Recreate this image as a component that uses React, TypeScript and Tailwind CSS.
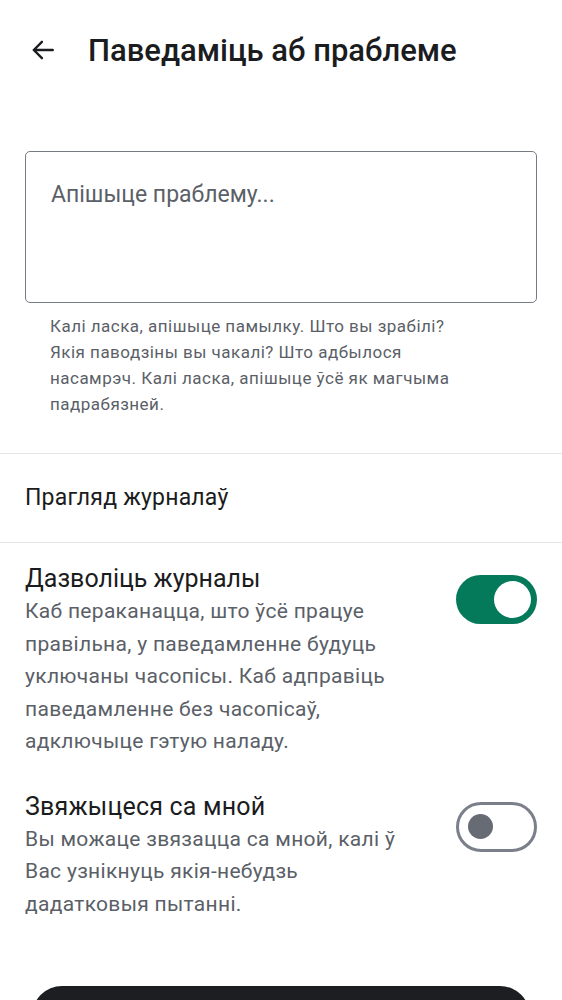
import React from "react";

export default function App() {
  return (
    <div className="w-[562px] h-[1000px] overflow-hidden bg-white" style={{ fontFamily: "Roboto, 'Noto Sans', sans-serif" }}>
      <div className="h-[100px] flex items-center pl-[30px]">
        <svg width="26" height="26" viewBox="0 0 24 24" fill="none" stroke="#1b1c20" strokeWidth="2.2" strokeLinecap="round" strokeLinejoin="round">
          <path d="M21 12H3.5M11 4.5L3.5 12L11 19.5" />
        </svg>
        <h1 className="ml-[32px] text-[31px] font-medium text-[#1b1c20] leading-none">Паведаміць аб праблеме</h1>
      </div>
      <div className="px-[25px] pt-[51px]">
        <div className="h-[152px] border border-[#767b85] rounded-[5px] px-[25px] pt-[28px] text-[23px] text-[#5b5f68] leading-[30px]">
          Апішыце праблему...
        </div>
        <p className="pl-[25px] pr-[55px] mt-[10px] text-[17px] leading-[26px] tracking-[0.48px] text-[#5b5f68]">
          Калі ласка, апішыце памылку. Што вы зрабілі? Якія паводзіны вы чакалі? Што адбылося насамрэч. Калі ласка, апішыце ўсё як магчыма падрабязней.
        </p>
      </div>
      <div className="mt-[36px] border-t border-[#e6e6ea]" />
      <div className="h-[88px] flex items-center px-[25px] text-[23px] tracking-[0.2px] text-[#1b1c20]">Прагляд журналаў</div>
      <div className="border-t border-[#e6e6ea]" />
      <div className="flex items-start px-[25px] pt-[20px] gap-[40px]">
        <div className="flex-1">
          <div className="text-[25px] leading-[32px] text-[#1b1c20]">Дазволіць журналы</div>
          <div className="text-[21px] leading-[32.5px] text-[#5b5f68] tracking-[0.3px]">
            Каб пераканацца, што ўсё працуе правільна, у паведамленне будуць уключаны часопісы. Каб адправіць паведамленне без часопісаў, адключыце гэтую наладу.
          </div>
        </div>
        <div className="mt-[12px] w-[81px] h-[49px] rounded-full bg-[#047a5b] flex items-center justify-end pr-[6px] shrink-0">
          <div className="w-[37px] h-[37px] rounded-full bg-white" />
        </div>
      </div>
      <div className="flex items-start px-[25px] pt-[33px] gap-[40px]">
        <div className="flex-1">
          <div className="text-[25px] leading-[32px] tracking-[0.2px] text-[#1b1c20]">Звяжыцеся са мной</div>
          <div className="text-[21px] leading-[32.5px] text-[#5b5f68] tracking-[0.3px]">
            Вы можаце звязацца са мной, калі ў Вас узнікнуць якія-небудзь дадатковыя пытанні.
          </div>
        </div>
        <div className="mt-[11px] w-[81px] h-[50px] rounded-full border-[3px] border-[#7a7f89] flex items-center pl-[9px] shrink-0">
          <div className="w-[25px] h-[25px] rounded-full bg-[#676b74]" />
        </div>
      </div>
      <div className="px-[32px] mt-[66px]">
        <div className="h-[60px] rounded-[30px] bg-[#1d1e22]" />
      </div>
    </div>
  );
}
